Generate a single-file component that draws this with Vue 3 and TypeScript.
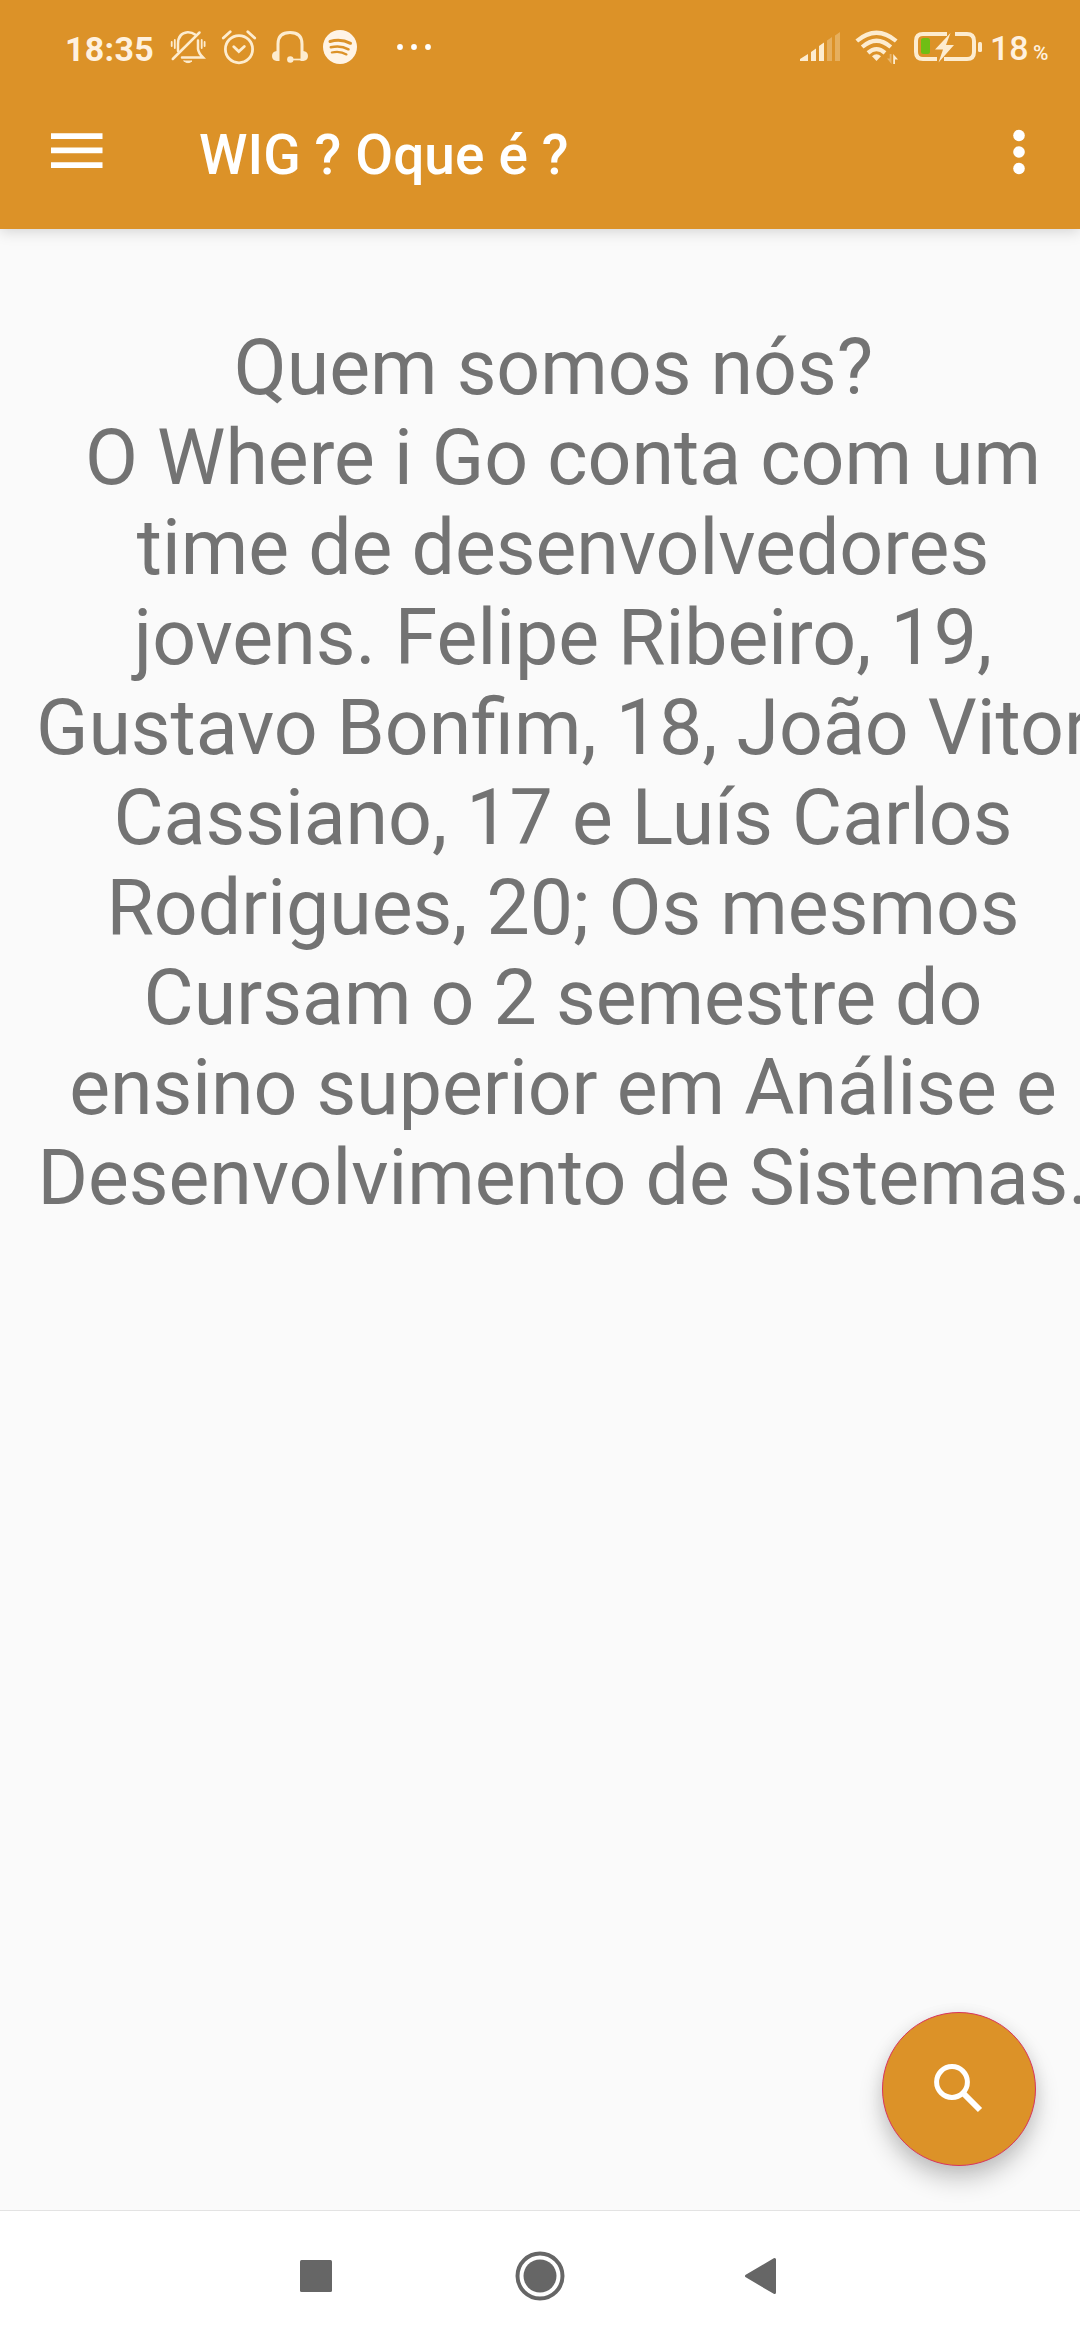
<script setup lang="ts">
const title: string = 'WIG ? Oque é ?'
const lines: string[] = [
  'Quem somos nós?\u00a0',
  'O Where i Go conta com um',
  'time de desenvolvedores',
  'jovens. Felipe Ribeiro, 19,',
  'Gustavo Bonfim, 18, João Vitor',
  'Cassiano, 17 e Luís Carlos',
  'Rodrigues, 20; Os mesmos',
  'Cursam o 2 semestre do',
  'ensino superior em Análise e',
  'Desenvolvimento de Sistemas.',
]
</script>

<template>
  <div class="screen">
    <header class="top">
      <div class="status">
        <span class="clock">18:35</span>
        <svg class="bell" width="36" height="36" viewBox="0 0 36 36" fill="none" stroke="#fdeccf" stroke-width="2.5" stroke-linecap="round">
          <path d="M8 22V15Q8 4 17.500 3.200Q22 3 25 5.500M28 11.500V20Q28.500 24 33 28.500H12" />
          <path d="M2.800 30L29.500 3.500" />
          <path d="M4.800 11V19M1.700 13V17M31.700 11V19M34.600 13V17" stroke-width="1.800" />
          <path d="M14 32h8q-4 3.500-8 0z" fill="#fdeccf" stroke-width="1" />
        </svg>
        <svg class="alarm" width="36" height="36" viewBox="0 0 36 36" fill="none" stroke="#fdeccf" stroke-width="2.800" stroke-linecap="round">
          <circle cx="18" cy="20.200" r="13.600" />
          <path d="M2.300 9L9.200 2.800M33.700 9L26.800 2.800M12.800 17.800L17.800 22.500L23.300 17.500" />
        </svg>
        <svg class="headset" width="36" height="36" viewBox="0 0 36 36" fill="none" stroke="#fdeccf" stroke-width="3">
          <path d="M6 32V15Q6 3.500 18 3.500T30 15V32" />
          <path d="M5 22v10q-5-.5-5-5t5-5zM31 22v10q5-.5 5-5t-5-5z" fill="#fdeccf" stroke="none" />
          <circle cx="18.300" cy="30.500" r="3.200" fill="#fdeccf" stroke="none" />
          <path d="M18 30.500H31" stroke-width="1.700" />
        </svg>
        <svg class="spotify" width="34" height="34" viewBox="0 0 34 34" fill="none" stroke="#dc9228" stroke-linecap="round">
          <circle cx="17" cy="17" r="17" fill="#fff4e6" stroke="none" />
          <path d="M7 11.500Q18 8.500 27.500 13.300" stroke-width="3" />
          <path d="M7.800 17.300Q17.500 14.800 25.500 19.300" stroke-width="2.500" />
          <path d="M8.800 22.500Q17 20.500 23.500 24.500" stroke-width="2.100" />
        </svg>
        <svg class="more" width="34" height="6" viewBox="0 0 34 6" fill="#fff">
          <circle cx="3" cy="3" r="2.900" /><circle cx="17" cy="3" r="2.900" /><circle cx="31" cy="3" r="2.900" />
        </svg>
        <span class="spacer"></span>
        <svg class="signal" width="40" height="30" viewBox="0 0 40 30" fill="#fdeccf">
          <path d="M0 29V27L8 22V29zM11 29V20L16 16.500V29zM19 29V14L24 10.500V29z" />
          <path d="M27 29V8.500L32 5V29zM35 29V3.500L40 0V29z" opacity=".32" />
        </svg>
        <svg class="wifi" width="44" height="34" viewBox="0 0 44 34" fill="none" stroke="#fdeccf" stroke-width="4.200">
          <path d="M1.800 11Q21.500-5.500 41.200 11M7.200 17Q21.500 4.500 35.800 17M13 22.800Q21.500 15.500 30 22.800" />
          <path d="M17 26.300Q21.500 22.300 26 26.300L21.500 31z" fill="#fdeccf" stroke="none" />
          <path d="M38.200 34V24L43 29.500H40V34z" fill="#fdeccf" stroke="none" />
          <path d="M36.500 24V34L32 28.500H34.700V24z" fill="#fdeccf" stroke="none" opacity=".4" />
        </svg>
        <svg class="battery" width="68" height="32" viewBox="0 0 68 32">
          <path d="M33 3H9Q2 3 2 10V21Q2 28 9 28H23M41 3H53Q60 3 60 10V21Q60 28 53 28H30" fill="none" stroke="#fdeccf" stroke-width="4" />
          <rect x="7" y="7" width="9" height="16" rx="2.500" fill="#6fbe14" />
          <path d="M36.500 2L21 18.500H29L24.500 31.500L40 14H32z" fill="#fdeccf" />
          <rect x="64" y="11" width="4" height="10" rx="1.500" fill="#fdeccf" />
        </svg>
        <span class="level">18</span><span class="percent">%</span>
      </div>
      <div class="toolbar">
        <svg class="menu" width="52" height="36" viewBox="0 0 52 36" fill="#fff">
          <path d="M0 .2H51.500V5.900H0zM0 14.500H51.500V20.200H0zM0 29.200H51.500V34.900H0z" />
        </svg>
        <h1 class="title">{{ title }}</h1>
        <svg class="overflow" width="12" height="46" viewBox="0 0 12 46" fill="#fff">
          <circle cx="6" cy="6.500" r="5.800" /><circle cx="6" cy="23" r="5.800" /><circle cx="6" cy="39.500" r="5.800" />
        </svg>
      </div>
    </header>

    <main class="content">
      <p class="about">
        <span v-for="line in lines" :key="line" class="line">{{ line }}</span>
      </p>
      <button class="fab" aria-label="Buscar">
        <svg width="52" height="52" viewBox="0 0 52 52" fill="none" stroke="#fff">
          <circle cx="19" cy="19" r="15.400" stroke-width="5" />
          <path d="M30 30L47 47" stroke-width="6" />
        </svg>
      </button>
    </main>

    <nav class="nav">
      <svg class="recents" width="32" height="32" viewBox="0 0 32 32"><rect width="32" height="32" rx="1.500" fill="#666" /></svg>
      <svg class="home" width="50" height="50" viewBox="0 0 50 50">
        <circle cx="25" cy="25" r="22.500" fill="none" stroke="#666" stroke-width="4" />
        <circle cx="25" cy="25" r="16.500" fill="#666" />
      </svg>
      <svg class="back" width="31" height="38" viewBox="0 0 31 38">
        <path d="M1.500 19L29.500 2.500V35.500z" fill="#666" stroke="#666" stroke-width="3" stroke-linejoin="round" />
      </svg>
    </nav>
  </div>
</template>

<style>
body {
  margin: 0;
}
</style>

<style scoped>
.screen {
  width: 1080px;
  height: 2340px;
  display: flex;
  flex-direction: column;
  overflow: hidden;
  background: #fafafa;
  font-family: Roboto, 'Liberation Sans', sans-serif;
}
svg {
  display: block;
  flex: none;
  overflow: visible;
}
.top {
  flex: none;
  height: 229px;
  background: #dc9228;
  box-shadow: 0 2px 14px rgba(0, 0, 0, 0.17);
}
.status {
  height: 75px;
  box-sizing: border-box;
  padding: 19px 30px 0 65px;
  display: flex;
  align-items: center;
  color: #fff1df;
}
.clock {
  width: 105px;
  padding-top: 3px;
  font-size: 34px;
  line-height: 40px;
  font-weight: 700;
  letter-spacing: 0.3px;
}
.alarm {
  margin-left: 15px;
}
.headset {
  margin-left: 15px;
}
.spotify {
  margin-left: 15px;
}
.more {
  margin-left: 40px;
}
.spacer {
  flex: 1;
}
.wifi {
  margin-left: 15px;
}
.battery {
  margin-left: 15px;
}
.level {
  margin-left: 8px;
  width: 43px;
  padding-top: 1px;
  font-size: 34px;
  line-height: 40px;
  font-weight: 500;
}
.percent {
  width: 17px;
  font-size: 21px;
  line-height: 24px;
  font-weight: 500;
  padding-top: 12px;
}
.toolbar {
  height: 154px;
  box-sizing: border-box;
  padding: 0 55px 0 51px;
  display: flex;
  align-items: flex-start;
}
.menu {
  margin-top: 58px;
}
.title {
  margin: 48px 0 0 96px;
  flex: 1;
  color: #fff;
  font-size: 55px;
  line-height: 65px;
  font-weight: 500;
  letter-spacing: 0.1px;
}
.overflow {
  margin-top: 54px;
}
.content {
  flex: 1;
  position: relative;
}
.about {
  margin: 94px 0 0 37px;
  width: 1052px;
  color: #737373;
  font-size: 77px;
  line-height: 90px;
}
.line {
  display: flex;
  justify-content: center;
  white-space: nowrap;
}
.fab {
  position: absolute;
  right: 44px;
  bottom: 44px;
  width: 154px;
  height: 154px;
  padding: 0;
  border: 1px solid #d9345c;
  border-radius: 50%;
  background: #dc9228;
  display: flex;
  align-items: center;
  justify-content: center;
  box-shadow: 0 14px 24px rgba(0, 0, 0, 0.2), 0 3px 16px rgba(0, 0, 0, 0.08);
}
.nav {
  flex: none;
  height: 130px;
  box-sizing: border-box;
  border-top: 1px solid #e3e3e3;
  background: #fff;
  display: flex;
  align-items: center;
  padding-left: 300px;
}
.home {
  margin-left: 182.500px;
}
.back {
  margin-left: 180.500px;
}
</style>
